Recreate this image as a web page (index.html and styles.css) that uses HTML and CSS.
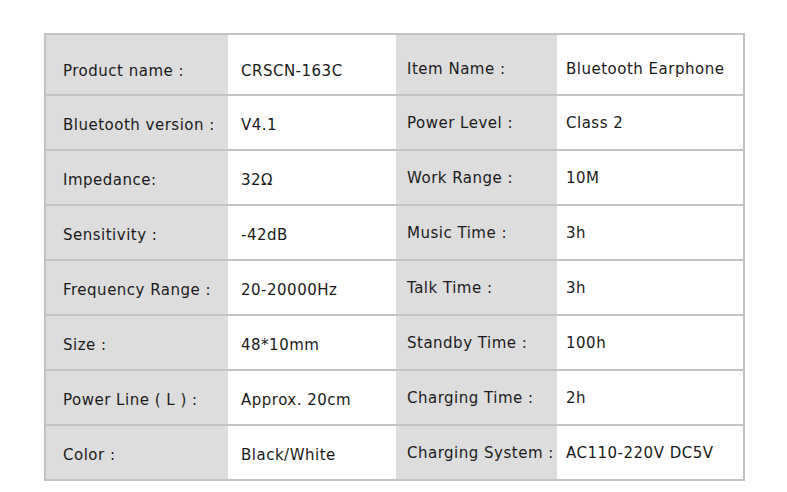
FILE: index.html
```html
<!DOCTYPE html>
<html>
<head>
<meta charset="utf-8">
<link rel="stylesheet" href="styles.css">
</head>
<body>
<div class="spec">
  <div class="row first">
    <div class="cell label c1">Product name :</div>
    <div class="cell value c2">CRSCN-163C</div>
    <div class="cell label c3">Item Name :</div>
    <div class="cell value c4">Bluetooth Earphone</div>
  </div>
  <div class="row">
    <div class="cell label c1">Bluetooth version :</div>
    <div class="cell value c2">V4.1</div>
    <div class="cell label c3">Power Level :</div>
    <div class="cell value c4">Class 2</div>
  </div>
  <div class="row">
    <div class="cell label c1">Impedance:</div>
    <div class="cell value c2">32Ω</div>
    <div class="cell label c3">Work Range :</div>
    <div class="cell value c4">10M</div>
  </div>
  <div class="row">
    <div class="cell label c1">Sensitivity :</div>
    <div class="cell value c2">-42dB</div>
    <div class="cell label c3">Music Time :</div>
    <div class="cell value c4">3h</div>
  </div>
  <div class="row">
    <div class="cell label c1">Frequency Range :</div>
    <div class="cell value c2">20-20000Hz</div>
    <div class="cell label c3">Talk Time :</div>
    <div class="cell value c4">3h</div>
  </div>
  <div class="row">
    <div class="cell label c1">Size :</div>
    <div class="cell value c2">48*10mm</div>
    <div class="cell label c3">Standby Time :</div>
    <div class="cell value c4">100h</div>
  </div>
  <div class="row">
    <div class="cell label c1">Power Line ( L ) :</div>
    <div class="cell value c2">Approx. 20cm</div>
    <div class="cell label c3">Charging Time :</div>
    <div class="cell value c4">2h</div>
  </div>
  <div class="row">
    <div class="cell label c1">Color :</div>
    <div class="cell value c2">Black/White</div>
    <div class="cell label c3">Charging System :</div>
    <div class="cell value c4">AC110-220V DC5V</div>
  </div>
</div>
</body>
</html>
```

FILE: styles.css
```css
html, body {
  margin: 0;
  padding: 0;
  background: #ffffff;
}

body {
  font-family: "DejaVu Sans", Verdana, sans-serif;
  font-size: 15px;
  letter-spacing: 0.5px;
  color: #1a1a1a;
}

.spec {
  margin: 33px 0 0 44px;
  width: 697px;
  border: 2px solid #c3c3c3;
  display: flex;
  flex-direction: column;
}

.row {
  display: grid;
  grid-template-columns: 182px 168px 161px 186px;
  height: 53px;
  border-top: 2px solid #c3c3c3;
}

.row.first {
  height: 59px;
  border-top: none;
}

.cell {
  display: flex;
  align-items: center;
  white-space: nowrap;
  padding-top: 5px;
  box-sizing: border-box;
}

.label {
  background: #dddddd;
}

.value {
  background: #ffffff;
}

.c1 { padding-left: 17px; }
.c2 { padding-left: 13px; }
.c3 { padding-left: 11px; padding-top: 1px; }
.c4 { padding-left: 9px; padding-top: 1px; }

.first .c1, .first .c2 { padding-top: 13px; }
.first .c3, .first .c4 { padding-top: 9px; }
```
